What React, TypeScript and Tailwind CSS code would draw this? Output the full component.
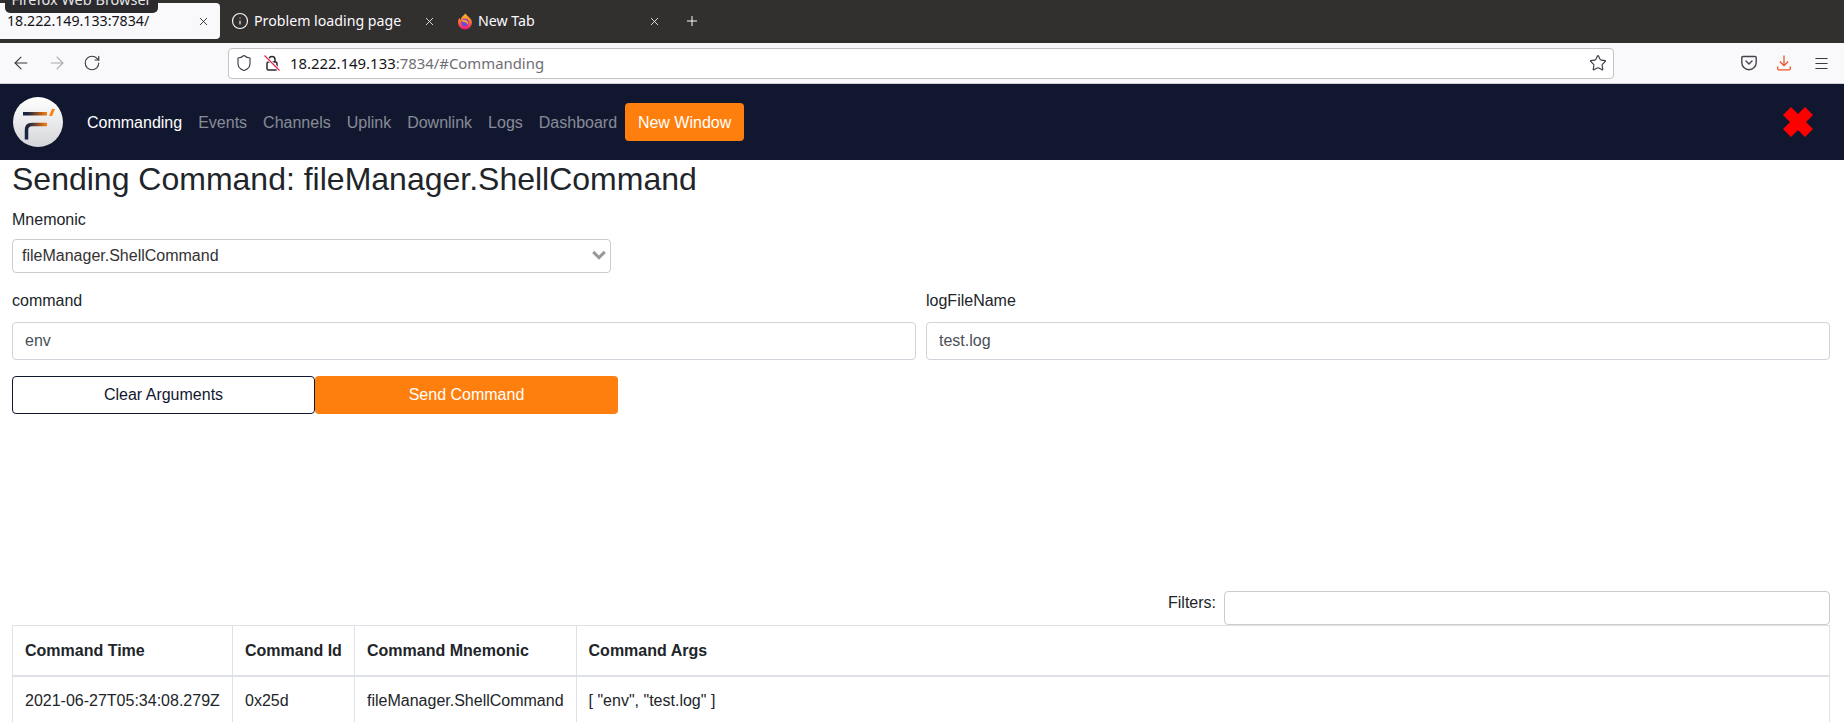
import React from 'react'
import { ArrowLeft, ArrowRight, RotateCw, Shield, Star, Menu, Info, X, Plus } from 'lucide-react'

const navLinks = ['Events', 'Channels', 'Uplink', 'Downlink', 'Logs', 'Dashboard']

const FirefoxIcon = () => (
  <svg width="16" height="17" viewBox="0 0 16 17" className="shrink-0">
    <defs>
      <linearGradient id="fx" x1="0" y1="0" x2="0" y2="1">
        <stop offset="0" stopColor="#ffbd2e" />
        <stop offset="0.55" stopColor="#ff6a2b" />
        <stop offset="1" stopColor="#e31587" />
      </linearGradient>
    </defs>
    <path d="M8.5 0.5c.6 1.6 1.8 2.2 3 3.2 1.8 1.4 3.5 3.2 3.5 5.8a7 7 0 1 1-14 0c0-2 .7-3.6 1.6-4.6.1 1 .5 1.6 1 2C3.900 4.200 6.500 2.500 8.500.5z" fill="url(#fx)" />
    <circle cx="8" cy="9.500" r="3.800" fill="#7542e5" />
    <path d="M4.500 7.500c1.500-1 4-1 5.500.2 1.200 1 1.500 2.800.5 4-.6-1.800-2-2.800-3.500-2.800-1.200 0-2 .3-2.500-1.400z" fill="#ff9a2e" />
  </svg>
)

const InsecureLock = () => (
  <svg width="18" height="18" viewBox="0 0 18 18" fill="none" className="shrink-0">
    <path d="M6 8V5.500a3 3 0 0 1 6 0V8" stroke="#2b2a33" strokeWidth="1.500" />
    <rect x="4" y="8" width="10" height="8" rx="1.500" stroke="#2b2a33" strokeWidth="1.500" />
    <path d="M2 2l14 14" stroke="#ffffff" strokeWidth="3" />
    <path d="M1.500 1.500l15 15" stroke="#e22850" strokeWidth="1.300" />
  </svg>
)

const PocketIcon = () => (
  <svg width="16" height="16" viewBox="0 0 16 16" fill="none">
    <path d="M2 1.500h12a1.200 1.200 0 0 1 1.200 1.200v4.800a7.200 7.200 0 0 1-14.400 0V2.700A1.200 1.200 0 0 1 2 1.500z" stroke="#45444c" strokeWidth="1.400" />
    <path d="M5 6l3 3 3-3" stroke="#45444c" strokeWidth="1.400" strokeLinecap="round" />
  </svg>
)

const DownloadIcon = () => (
  <svg width="16" height="16" viewBox="0 0 16 16" fill="none" stroke="#f0532a" strokeWidth="1.300">
    <path d="M8 0.500v10M3.800 6.500L8 10.700l4.200-4.200" />
    <path d="M1.700 11.500v2a1.300 1.300 0 0 0 1.300 1.300h10a1.300 1.300 0 0 0 1.300-1.300v-2" />
  </svg>
)

const Logo = () => (
  <svg width="50" height="50" viewBox="0 0 50 50" className="shrink-0">
    <defs>
      <linearGradient id="disc" x1="0" y1="0" x2="0" y2="1">
        <stop offset="0" stopColor="#ffffff" />
        <stop offset="1" stopColor="#d4d5d8" />
      </linearGradient>
      <linearGradient id="bar" x1="0" y1="0" x2="1" y2="0">
        <stop offset="0.2" stopColor="#1a2340" />
        <stop offset="1" stopColor="#ff7f0e" />
      </linearGradient>
      <linearGradient id="hook" gradientUnits="userSpaceOnUse" x1="12" y1="0" x2="34" y2="0">
        <stop offset="0.15" stopColor="#1a2340" />
        <stop offset="1" stopColor="#ff7f0e" />
      </linearGradient>
    </defs>
    <circle cx="25" cy="25" r="25" fill="url(#disc)" />
    <rect x="10" y="15" width="24" height="3.500" fill="url(#bar)" />
    <path d="M39 12h3l-3 7h-3z" fill="#ff7f0e" />
    <path d="M13.500 42.500V33c0-3.500 2-5.500 5.500-5.500h15" stroke="url(#hook)" strokeWidth="3.500" fill="none" />
  </svg>
)

const App: React.FC = () => {
  return (
    <div className="h-screen overflow-hidden bg-white text-[#212529] font-['Liberation_Sans',Arial,sans-serif]">
      {/* Browser tabs */}
      <div className="relative flex h-[43px] bg-[#322f2f] pt-[3px] font-['Noto_Sans',sans-serif] text-[14.200px] text-[#fbfbfe]">
        <div className="absolute left-[5px] top-[-7px] z-10 flex h-5 w-[153px] items-center justify-center rounded-b-[5px] bg-[#2b2a2e] pb-[6px] text-[14.500px] text-[#e6e6e6]">
          Firefox Web Browser
        </div>
        <div className="flex h-9 w-[220px] items-center justify-between rounded-r-[4px] bg-[#f9f9fb] pl-[7px] pr-[10px] text-[#15141a]">
          <span>18.222.149.133:7834/</span>
          <X size={13} strokeWidth={1.5} />
        </div>
        <div className="flex h-9 w-[226px] items-center gap-[5px] pl-[11px] pr-[10px]">
          <Info size={18} strokeWidth={1.5} />
          <span className="flex-1">Problem loading page</span>
          <X size={13} strokeWidth={1.5} />
        </div>
        <div className="flex h-9 w-[225px] items-center gap-[5px] pl-[11px] pr-[10px]">
          <FirefoxIcon />
          <span className="flex-1">New Tab</span>
          <X size={13} strokeWidth={1.5} />
        </div>
        <div className="flex h-9 items-center pl-[13px]">
          <Plus size={16} strokeWidth={1.5} />
        </div>
      </div>

      {/* Browser toolbar */}
      <div className="flex h-[41px] items-center border-b border-[#cfcfd8] bg-[#f9f9fb] text-[#3a3944]">
        <div className="flex w-[228px] items-center gap-4 pl-[11px]">
          <ArrowLeft size={20} strokeWidth={1.3} />
          <ArrowRight size={20} strokeWidth={1.3} className="text-[#a9a9af]" />
          <RotateCw size={18} strokeWidth={1.5} />
        </div>
        <div className="flex h-[31px] w-[1386px] items-center rounded-[4px] border border-[#c4c4c8] bg-white pl-[6px] pr-[6px] font-['Noto_Sans',sans-serif] text-[14.900px]">
          <Shield size={18} strokeWidth={1.5} className="shrink-0" />
          <div className="ml-[10px]"><InsecureLock /></div>
          <span className="ml-[9px] flex-1 pt-px">
            <span className="text-[#15141a]">18.222.149.133</span>
            <span className="text-[#6f6e75]">:7834/#Commanding</span>
          </span>
          <Star size={18} strokeWidth={1.5} />
        </div>
        <div className="ml-[127px] flex items-center gap-[19px]">
          <PocketIcon />
          <DownloadIcon />
          <Menu size={17} strokeWidth={1.5} className="ml-[2px]" />
        </div>
      </div>

      {/* App navbar */}
      <nav className="flex h-[76px] items-center bg-[#11172f] pl-[13px] pr-[31px]">
        <Logo />
        <div className="ml-4 flex items-center">
          <a className="px-2 pt-px text-white">Commanding</a>
          {navLinks.map((link) => (
            <a key={link} className="px-2 pt-px text-white/50">{link}</a>
          ))}
          <button className="h-[38px] w-[119px] rounded-[4px] bg-[#ff7f0e] pt-px text-white">New Window</button>
        </div>
        <svg width="30" height="30" viewBox="0 0 30 30" className="ml-auto">
          <path d="M8 0l7 7 7-7 8 8-7 7 7 7-8 8-7-7-7 7-8-8 7-7-7-7z" fill="#ff0000" />
        </svg>
      </nav>

      {/* Command form */}
      <main className="pl-3 pr-[14px]">
        <h2 className="text-[32px] leading-[38px] font-normal">Sending Command: fileManager.ShellCommand</h2>
        <label className="mt-[10px] block leading-6">Mnemonic</label>
        <div className="relative mt-[7px] w-[599px]">
          <select className="block h-[34px] w-full appearance-none rounded-[4px] border border-[#ccc] bg-white pl-[9px] text-[#333]">
            <option>fileManager.ShellCommand</option>
          </select>
          <svg width="16" height="12" viewBox="0 0 18 14" className="absolute right-[4px] top-[11px]">
            <path d="M1 3.500L3.500 1 9 6.500 14.500 1 17 3.500 9 11.500z" fill="#999999" />
          </svg>
        </div>

        <div className="mt-4 grid grid-cols-2 gap-[10px]">
          <div>
            <label className="block leading-6">command</label>
            <input readOnly defaultValue="env" className="mt-[9px] block h-[38px] w-full rounded-[4px] border border-[#ced4da] px-3 text-[#495057]" />
          </div>
          <div>
            <label className="block leading-6">logFileName</label>
            <input readOnly defaultValue="test.log" className="mt-[9px] block h-[38px] w-full rounded-[4px] border border-[#ced4da] px-3 text-[#495057]" />
          </div>
        </div>

        <div className="mt-4 flex">
          <button className="h-[38px] w-[303px] rounded-[4px] border border-[#11172f] bg-white text-[#11172f]">Clear Arguments</button>
          <button className="h-[38px] w-[303px] rounded-[4px] bg-[#ff7f0e] text-white">Send Command</button>
        </div>

        {/* Command history */}
        <div className="mt-[177px] flex items-start justify-end gap-2">
          <span className="leading-6">Filters:</span>
          <input readOnly className="h-[34px] w-[606px] rounded-[4px] border border-[#ccc]" />
        </div>
        <table className="w-full border-collapse border border-[#dee2e6]">
          <thead>
            <tr className="h-[50px] border-b-2 border-[#dee2e6] text-left">
              <th className="w-[220px] border border-b-2 border-[#dee2e6] px-3 pt-[2px] font-bold">Command Time</th>
              <th className="w-[122px] border border-b-2 border-[#dee2e6] px-3 pt-[2px] font-bold">Command Id</th>
              <th className="w-[220px] border border-b-2 border-[#dee2e6] px-3 pt-[2px] font-bold">Command Mnemonic</th>
              <th className="border border-b-2 border-[#dee2e6] px-3 pt-[2px] font-bold">Command Args</th>
            </tr>
          </thead>
          <tbody>
            <tr className="h-[49px]">
              <td className="border border-[#dee2e6] px-3 pt-[2px]">2021-06-27T05:34:08.279Z</td>
              <td className="border border-[#dee2e6] px-3 pt-[2px]">0x25d</td>
              <td className="border border-[#dee2e6] px-3 pt-[2px]">fileManager.ShellCommand</td>
              <td className="border border-[#dee2e6] px-3 pt-[2px]">[ "env", "test.log" ]</td>
            </tr>
          </tbody>
        </table>
      </main>
    </div>
  )
}

export default App
